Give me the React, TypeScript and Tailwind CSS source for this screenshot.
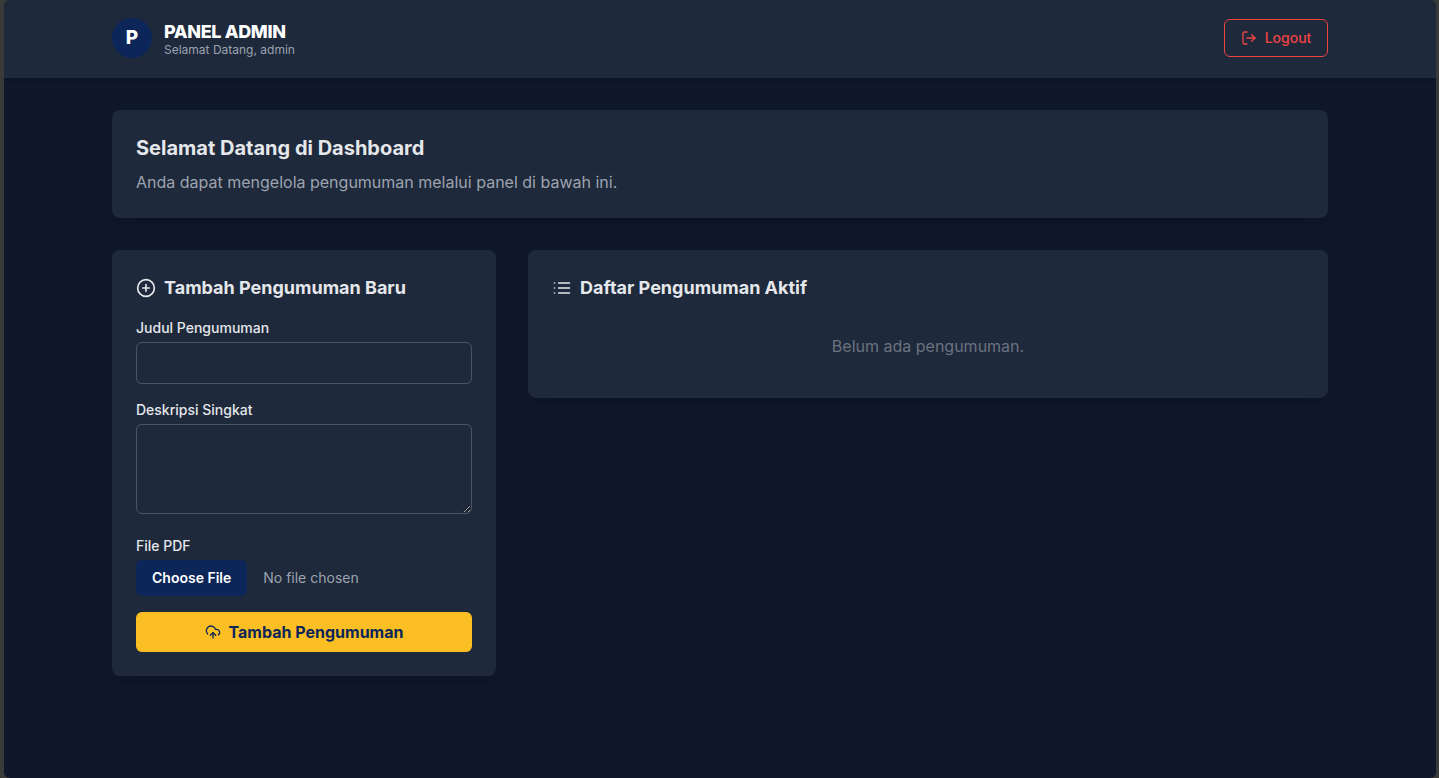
import { CloudUpload } from "lucide-react";
import { FiList, FiLogOut, FiPlusCircle } from "react-icons/fi";

export default function App() {
  return (
    <div className="h-[778px] overflow-hidden bg-[#3a3a38] pr-[3px] pl-1 font-['Inter',sans-serif]">
      <div className="h-full overflow-hidden rounded-md bg-[#0f172a] text-gray-200">
        <header className="relative h-[78px] bg-[#1e293b] shadow-md">
          <div className="ml-[108px] flex h-[76px] w-[1216px] items-center justify-between">
            <div className="flex items-center gap-3">
              <div className="flex size-10 items-center justify-center rounded-full bg-[#0c2659] text-[19px] font-extrabold text-white">P</div>
              <div className="pt-1.5">
                <h1 className="text-lg leading-[18px] font-extrabold tracking-[-0.36px] text-white">PANEL ADMIN</h1>
                <p className="text-xs leading-[18px] text-[#9ca3af]">Selamat Datang, admin</p>
              </div>
            </div>
            <button className="flex h-[38px] w-[104px] items-center justify-center gap-2 rounded-md border border-[#ef4444] text-sm font-medium text-[#ef4444]">
              <FiLogOut className="size-4" />
              Logout
            </button>
          </div>
        </header>
        <main className="mt-8 ml-[108px] w-[1216px]">
          <section className="h-[108px] rounded-lg bg-[#1e293b] p-6 shadow-lg">
            <h2 className="text-xl leading-7 font-bold">Selamat Datang di Dashboard</h2>
            <p className="mt-2 text-base text-[#9ca3af]">Anda dapat mengelola pengumuman melalui panel di bawah ini.</p>
          </section>
          <div className="mt-8 grid grid-cols-3 items-start gap-8">
            <section className="h-[426px] rounded-lg bg-[#1e293b] p-6 shadow-lg">
              <h3 className="flex items-center gap-2 text-lg leading-7 font-bold"><FiPlusCircle className="size-5" />Tambah Pengumuman Baru</h3>
              <form className="mt-4">
                <label className="block text-sm font-medium">Judul Pengumuman</label>
                <input className="mt-1 block h-[42px] w-full rounded-md border border-[#4b5563] px-3" />
                <label className="mt-4 block text-sm font-medium">Deskripsi Singkat</label>
                <textarea className="mt-1 block h-[90px] w-full resize-y rounded-md border border-[#4b5563] px-3 py-2" />
                <label className="mt-[22px] block text-sm font-medium">File PDF</label>
                <input type="file" className="mt-1 block h-9 w-full text-sm text-[#9ca3af] file:mr-4 file:h-9 file:rounded-md file:border-0 file:bg-[#0c2659] file:px-4 file:py-2 file:text-sm file:font-semibold file:text-white" />
                <button type="button" className="mt-4 flex h-10 w-full items-center justify-center gap-2 rounded-md bg-[#fbbf24] text-base font-bold text-[#0c2659]"><CloudUpload className="size-4" />Tambah Pengumuman</button>
              </form>
            </section>
            <section className="col-span-2 h-[148px] rounded-lg bg-[#1e293b] p-6 shadow-lg">
              <h3 className="flex items-center gap-2 text-lg leading-7 font-bold"><FiList className="size-5" />Daftar Pengumuman Aktif</h3>
              <p className="mt-8 text-center text-base text-[#6b7280]">Belum ada pengumuman.</p>
            </section>
          </div>
        </main>
      </div>
    </div>
  );
}
